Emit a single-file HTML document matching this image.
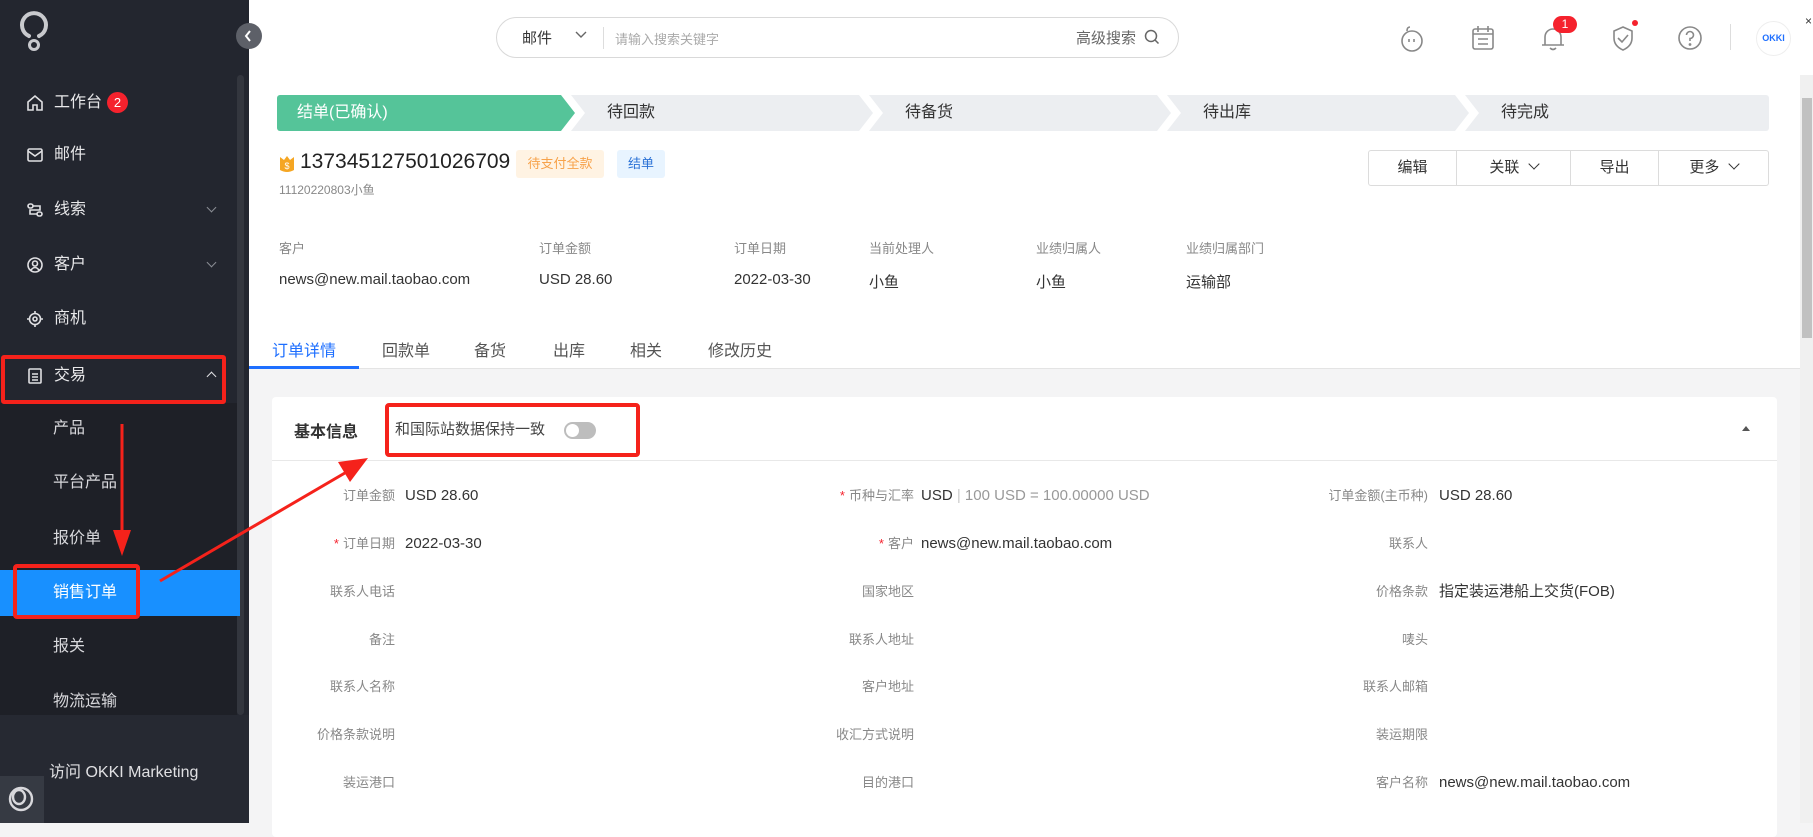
<!DOCTYPE html>
<html><head><meta charset="utf-8">
<style>
*{margin:0;padding:0;box-sizing:border-box}
body{width:1813px;height:823px;overflow:hidden;position:relative;background:#f4f4f5;font-family:"Liberation Sans","Noto Sans CJK SC",sans-serif;color:#333}
.a{position:absolute;white-space:nowrap}
#side{position:absolute;left:0;top:0;width:249px;height:823px;background:#23262f}
.mi{position:absolute;left:26px;color:#e8e8ea;font-size:16px;line-height:20px;display:flex;align-items:center}
.mi svg{margin-right:10px}
.sub{position:absolute;left:53px;color:#d8d8dc;font-size:16px;line-height:20px}
.chev{position:absolute;left:208px;width:7px;height:7px;border-right:1.5px solid #8a8d94;border-bottom:1.5px solid #8a8d94;transform:rotate(45deg)}
#hdr{position:absolute;left:249px;top:0;width:1564px;height:75px;background:#fff;box-shadow:0 2px 4px rgba(0,0,0,.06)}
.step{position:absolute;top:95px;height:36px;background:#eceef1;font-size:16px;line-height:36px;color:#333;padding-left:36px;clip-path:polygon(0 0,calc(100% - 14px) 0,100% 50%,calc(100% - 14px) 100%,0 100%,14px 50%)}
.lbl{position:absolute;font-size:13px;color:#888;text-align:right;width:160px;line-height:18px}
.val{position:absolute;font-size:15px;color:#333;line-height:18px}
.req{color:#f5222d;margin-right:4px}
.ic{position:absolute;top:24px}
</style></head><body>

<div id="side">
  <svg class="a" style="left:18px;top:8px" width="32" height="46" viewBox="0 0 32 46"><path d="M11 28 A12 12 0 1 1 21 28" fill="none" stroke="#c8c9cd" stroke-width="4" stroke-linecap="round"/><circle cx="16" cy="37" r="4.5" fill="none" stroke="#c8c9cd" stroke-width="3"/></svg>
  <div style="position:absolute;left:237px;top:75px;width:7px;height:640px;background:#33363e;border-radius:4px"></div>
  <div class="mi" style="top:92px"><svg width="18" height="18" viewBox="0 0 18 18" fill="none" stroke="#e0e0e3" stroke-width="1.6"><path d="M2 8 L9 2 L16 8 V16 H11 V11 H7 V16 H2 Z"/></svg>工作台<span style="display:inline-block;margin-left:5px;width:21px;height:21px;border-radius:50%;background:#f5222d;color:#fff;font-size:13px;text-align:center;line-height:21px">2</span></div>
  <div class="mi" style="top:145px"><svg width="18" height="18" viewBox="0 0 18 18" fill="none" stroke="#e0e0e3" stroke-width="1.6"><rect x="2" y="3" width="14" height="12" rx="1.5"/><path d="M2 5 L9 10 L16 5"/></svg>邮件</div>
  <div class="mi" style="top:200px"><svg width="18" height="18" viewBox="0 0 18 18" fill="none" stroke="#e0e0e3" stroke-width="1.6"><rect x="2" y="3" width="5" height="4" rx="2"/><rect x="11" y="11" width="5" height="4" rx="2"/><path d="M7 5 H14 V9 H4 V13 H11"/></svg>线索</div>
  <div class="chev" style="top:204px"></div>
  <div class="mi" style="top:255px"><svg width="18" height="18" viewBox="0 0 18 18" fill="none" stroke="#e0e0e3" stroke-width="1.6"><circle cx="9" cy="9" r="7"/><circle cx="9" cy="7.5" r="2.5"/><path d="M5 14 Q9 9 13 14"/></svg>客户</div>
  <div class="chev" style="top:259px"></div>
  <div class="mi" style="top:309px"><svg width="18" height="18" viewBox="0 0 18 18" fill="none" stroke="#e0e0e3" stroke-width="1.6"><circle cx="9" cy="9" r="5.5"/><circle cx="9" cy="9" r="2"/><path d="M9 1V3.5M9 14.5V17M1 9H3.5M14.5 9H17"/></svg>商机</div>
  <div style="position:absolute;left:0;top:403px;width:237px;height:312px;background:#1e2027"></div>
  <div class="mi" style="top:366px"><svg width="18" height="18" viewBox="0 0 18 18" fill="none" stroke="#e0e0e3" stroke-width="1.6"><rect x="3" y="2" width="12" height="14" rx="1"/><path d="M6 7H12M6 10H12M6 13H12"/></svg>交易</div>
  <div class="chev" style="top:373px;transform:rotate(225deg);border-color:#e0e0e3"></div>
  <div class="sub" style="top:419px">产品</div>
  <div class="sub" style="top:473px">平台产品</div>
  <div class="sub" style="top:529px">报价单</div>
  <div style="position:absolute;left:0;top:570px;width:240px;height:46px;background:#1890ff"></div>
  <div class="sub" style="top:583px;color:#fff">销售订单</div>
  <div class="sub" style="top:637px">报关</div>
  <div class="sub" style="top:692px">物流运输</div>
  <div style="position:absolute;left:0;top:715px;width:249px;height:108px;background:#262932"></div>
  <div class="a" style="left:49px;top:758px;color:#e0e0e3;font-size:16px">访问 OKKI Marketing</div>
  <div style="position:absolute;left:0;top:776px;width:44px;height:47px;background:#363a43"></div>
  <svg class="a" style="left:7px;top:785px" width="28" height="28" viewBox="0 0 28 28" fill="none" stroke="#d8d8dc" stroke-width="2.4"><circle cx="14" cy="14" r="11"/><ellipse cx="12" cy="12" rx="6" ry="7"/></svg>
  <div style="position:absolute;left:236px;top:23px;width:26px;height:26px;border-radius:50%;background:#5d6068;z-index:5"></div>
</div>
<svg class="a" style="left:243px;top:28px;z-index:6" width="10" height="16" viewBox="0 0 10 16"><path d="M7 3 L3 8 L7 13" fill="none" stroke="#fff" stroke-width="2"/></svg>

<div id="hdr">
  <div class="a" style="left:247px;top:17px;width:683px;height:41px;border:1px solid #d9d9d9;border-radius:21px"></div>
  <div class="a" style="left:273px;top:27px;font-size:15px;color:#333">邮件</div>
  <svg class="a" style="left:326px;top:31px" width="12" height="8" viewBox="0 0 12 8"><path d="M1 1 L6 6 L11 1" fill="none" stroke="#666" stroke-width="1.4"/></svg>
  <div class="a" style="left:354px;top:27px;width:1px;height:22px;background:#ddd"></div>
  <div class="a" style="left:366px;top:29px;font-size:13px;color:#aaa">请输入搜索关键字</div>
  <div class="a" style="left:827px;top:27px;font-size:15px;color:#666">高级搜索</div>
  <svg class="a" style="left:895px;top:29px" width="16" height="16" viewBox="0 0 16 16" fill="none" stroke="#666" stroke-width="1.5"><circle cx="7" cy="7" r="5.5"/><path d="M11 11 L14.5 14.5"/></svg>
</div>
<!-- header icons -->
<svg class="ic" style="left:1398px" width="28" height="30" viewBox="0 0 28 30" fill="none" stroke="#888" stroke-width="1.6"><circle cx="14" cy="17" r="10"/><path d="M9 7 Q9 3 12 3"/><path d="M11 15v3M16 15v3"/></svg>
<svg class="ic" style="left:1470px" width="26" height="28" viewBox="0 0 26 28" fill="none" stroke="#888" stroke-width="1.6"><rect x="3" y="5" width="20" height="20" rx="2"/><path d="M8 2v6M18 2v6M3 10H23M8 15H18M8 20H18"/></svg>
<svg class="ic" style="left:1539px" width="28" height="28" viewBox="0 0 28 28" fill="none" stroke="#888" stroke-width="1.6"><path d="M6 21 V13 A8 8 0 0 1 22 13 V21 H25 H3"/><path d="M11 24 Q14 27 17 24"/></svg>
<div class="a" style="left:1553px;top:16px;width:24px;height:17px;border-radius:9px;background:#f5222d;color:#fff;font-size:12px;text-align:center;line-height:17px">1</div>
<svg class="ic" style="left:1609px" width="28" height="28" viewBox="0 0 28 28" fill="none" stroke="#888" stroke-width="1.6"><path d="M14 3 L23 7 V14 Q23 22 14 26 Q5 22 5 14 V7 Z"/><path d="M9 14 L13 18 L19 11"/></svg>
<div class="a" style="left:1632px;top:20px;width:6px;height:6px;border-radius:50%;background:#f5222d"></div>
<svg class="ic" style="left:1676px" width="28" height="28" viewBox="0 0 28 28" fill="none" stroke="#888" stroke-width="1.6"><circle cx="14" cy="14" r="11"/><path d="M10.5 11 A3.5 3.5 0 1 1 14 14.5 V17"/><circle cx="14" cy="20.5" r=".6" fill="#888"/></svg>
<div class="a" style="left:1730px;top:24px;width:1px;height:26px;background:#ddd"></div>
<div class="a" style="left:1756px;top:21px;width:35px;height:35px;border-radius:50%;border:1px solid #eee;color:#1e6fff;font-size:9px;font-weight:bold;text-align:center;line-height:33px">OKKI</div>
<div class="a" style="left:1805px;top:14px;font-size:12px;color:#333">×</div>

<!-- main white area -->
<div class="a" style="left:249px;top:75px;width:1551px;height:294px;background:#fff;border-bottom:1px solid #e4e4e4"></div>
<div class="a" style="left:1800px;top:75px;width:13px;height:748px;background:#f0f0f0"></div>
<div class="a" style="left:1802px;top:98px;width:10px;height:240px;background:#c1c1c1"></div>

<div class="step" style="left:277px;width:298px;background:#55c499;color:#fff;padding-left:20px;clip-path:polygon(0 0,calc(100% - 14px) 0,100% 50%,calc(100% - 14px) 100%,0 100%);border-radius:3px 0 0 3px">结单(已确认)</div>
<div class="step" style="left:571px;width:302px">待回款</div>
<div class="step" style="left:869px;width:302px">待备货</div>
<div class="step" style="left:1167px;width:302px">待出库</div>
<div class="step" style="left:1465px;width:304px;clip-path:polygon(0 0,100% 0,100% 100%,0 100%,14px 50%);border-radius:0 3px 3px 0">待完成</div>

<svg class="a" style="left:278px;top:154px" width="18" height="20" viewBox="0 0 18 20"><path d="M2 3 L6 6 L9 2 L12 6 L16 3 V16 Q9 20 2 16 Z" fill="#f5a623"/><text x="9" y="15" font-size="9" fill="#fff" text-anchor="middle" font-family="Liberation Sans">$</text></svg>
<div class="a" style="left:300px;top:150px;font-size:21px;color:#222">137345127501026709</div>
<div class="a" style="left:516px;top:150px;width:88px;height:28px;background:#fff3e3;border-radius:3px;color:#f7a24a;font-size:13px;text-align:center;line-height:28px">待支付全款</div>
<div class="a" style="left:617px;top:150px;width:48px;height:28px;background:#e8f4ff;border-radius:3px;color:#2b72d6;font-size:13px;text-align:center;line-height:28px">结单</div>
<div class="a" style="left:279px;top:181px;font-size:12px;color:#888">11120220803小鱼</div>

<div class="a" style="left:1368px;top:150px;width:401px;height:36px;border:1px solid #dcdcdc;border-radius:3px;display:flex;font-size:15px;color:#333">
  <div style="width:88px;text-align:center;line-height:34px;border-right:1px solid #dcdcdc">编辑</div>
  <div style="width:114px;text-align:center;line-height:34px;border-right:1px solid #dcdcdc">关联 <span style="display:inline-block;width:8px;height:8px;border-right:1.8px solid #333;border-bottom:1.8px solid #333;transform:rotate(45deg);margin:0 0 4px 6px"></span></div>
  <div style="width:88px;text-align:center;line-height:34px;border-right:1px solid #dcdcdc">导出</div>
  <div style="flex:1;text-align:center;line-height:34px">更多 <span style="display:inline-block;width:8px;height:8px;border-right:1.8px solid #333;border-bottom:1.8px solid #333;transform:rotate(45deg);margin:0 0 4px 6px"></span></div>
</div>

<div class="a" style="left:279px;top:238px;font-size:13px;color:#888">客户</div>
<div class="a" style="left:539px;top:238px;font-size:13px;color:#888">订单金额</div>
<div class="a" style="left:734px;top:238px;font-size:13px;color:#888">订单日期</div>
<div class="a" style="left:869px;top:238px;font-size:13px;color:#888">当前处理人</div>
<div class="a" style="left:1036px;top:238px;font-size:13px;color:#888">业绩归属人</div>
<div class="a" style="left:1186px;top:238px;font-size:13px;color:#888">业绩归属部门</div>
<div class="a" style="left:279px;top:271px;font-size:15px">news@new.mail.taobao.com</div>
<div class="a" style="left:539px;top:271px;font-size:15px">USD 28.60</div>
<div class="a" style="left:734px;top:271px;font-size:15px">2022-03-30</div>
<div class="a" style="left:869px;top:271px;font-size:15px">小鱼</div>
<div class="a" style="left:1036px;top:271px;font-size:15px">小鱼</div>
<div class="a" style="left:1186px;top:271px;font-size:15px">运输部</div>

<div class="a" style="left:272px;top:337px;font-size:16px;color:#1e6fff">订单详情</div>
<div class="a" style="left:382px;top:337px;font-size:16px;color:#555">回款单</div>
<div class="a" style="left:474px;top:337px;font-size:16px;color:#555">备货</div>
<div class="a" style="left:553px;top:337px;font-size:16px;color:#555">出库</div>
<div class="a" style="left:630px;top:337px;font-size:16px;color:#555">相关</div>
<div class="a" style="left:708px;top:337px;font-size:16px;color:#555">修改历史</div>
<div class="a" style="left:249px;top:366px;width:110px;height:3px;background:#1e6fff"></div>

<!-- card -->
<div class="a" style="left:272px;top:397px;width:1505px;height:440px;background:#fff;border-radius:4px"></div>
<div class="a" style="left:272px;top:460px;width:1505px;height:1px;background:#e8e8e8"></div>
<div class="a" style="left:294px;top:418px;font-size:16px;font-weight:bold;color:#333">基本信息</div>
<div class="a" style="left:395px;top:418px;font-size:15px;color:#444">和国际站数据保持一致</div>
<div class="a" style="left:564px;top:422px;width:32px;height:17px;border-radius:9px;background:#bdbdbd"></div>
<div class="a" style="left:566px;top:424px;width:13px;height:13px;border-radius:50%;background:#fff"></div>
<svg class="a" style="left:1741px;top:425px" width="10" height="7" viewBox="0 0 10 7"><path d="M1 6 L5 1 L9 6Z" fill="#555"/></svg>

<!-- fields -->
<div class="lbl" style="left:235px;top:487px">订单金额</div><div class="val" style="left:405px;top:487px">USD 28.60</div>
<div class="lbl" style="left:754px;top:487px"><span class="req">*</span>币种与汇率</div><div class="val" style="left:921px;top:487px">USD <span style="color:#ccc">|</span> <span style="color:#999">100 USD = 100.00000 USD</span></div>
<div class="lbl" style="left:1268px;top:487px">订单金额(主币种)</div><div class="val" style="left:1439px;top:487px">USD 28.60</div>

<div class="lbl" style="left:235px;top:535px"><span class="req">*</span>订单日期</div><div class="val" style="left:405px;top:535px">2022-03-30</div>
<div class="lbl" style="left:754px;top:535px"><span class="req">*</span>客户</div><div class="val" style="left:921px;top:535px">news@new.mail.taobao.com</div>
<div class="lbl" style="left:1268px;top:535px">联系人</div>

<div class="lbl" style="left:235px;top:583px">联系人电话</div>
<div class="lbl" style="left:754px;top:583px">国家地区</div>
<div class="lbl" style="left:1268px;top:583px">价格条款</div><div class="val" style="left:1439px;top:583px">指定装运港船上交货(FOB)</div>

<div class="lbl" style="left:235px;top:631px">备注</div>
<div class="lbl" style="left:754px;top:631px">联系人地址</div>
<div class="lbl" style="left:1268px;top:631px">唛头</div>

<div class="lbl" style="left:235px;top:678px">联系人名称</div>
<div class="lbl" style="left:754px;top:678px">客户地址</div>
<div class="lbl" style="left:1268px;top:678px">联系人邮箱</div>

<div class="lbl" style="left:235px;top:726px">价格条款说明</div>
<div class="lbl" style="left:754px;top:726px">收汇方式说明</div>
<div class="lbl" style="left:1268px;top:726px">装运期限</div>

<div class="lbl" style="left:235px;top:774px">装运港口</div>
<div class="lbl" style="left:754px;top:774px">目的港口</div>
<div class="lbl" style="left:1268px;top:774px">客户名称</div><div class="val" style="left:1439px;top:774px">news@new.mail.taobao.com</div>

<!-- annotations -->
<div class="a" style="left:1px;top:355px;width:225px;height:49px;border:4px solid #f5221b;border-radius:3px;z-index:10"></div>
<div class="a" style="left:13px;top:564px;width:127px;height:55px;border:4px solid #f5221b;border-radius:4px;z-index:10"></div>
<div class="a" style="left:385px;top:403px;width:255px;height:54px;border:4px solid #f5221b;border-radius:4px;z-index:10"></div>
<svg class="a" style="left:0;top:0;z-index:11" width="1813" height="823" viewBox="0 0 1813 823">
  <path d="M122 424 V535" stroke="#f5221b" stroke-width="3"/>
  <path d="M113 530 L122 556 L131 530 Z" fill="#f5221b"/>
  <path d="M160 581 L350 470" stroke="#f5221b" stroke-width="3"/>
  <path d="M338 462 L368 458 L350 482 Z" fill="#f5221b"/>
</svg>
</body></html>
